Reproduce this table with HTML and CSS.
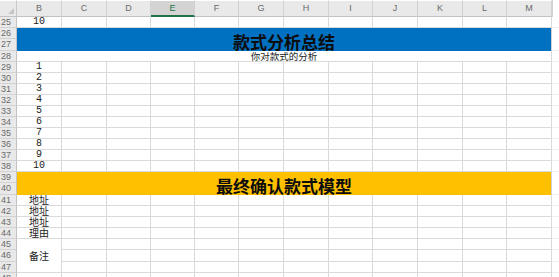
FILE: index.html
```html
<!DOCTYPE html>
<html lang="zh">
<head>
<meta charset="utf-8">
<title>Sheet</title>
<link rel="stylesheet" href="styles.css">
</head>
<body>
<div class="sheet">
  <div class="corner"></div>
  <div class="ch">B</div><div class="ch">C</div><div class="ch">D</div><div class="ch sel">E</div><div class="ch">F</div><div class="ch">G</div><div class="ch">H</div><div class="ch">I</div><div class="ch">J</div><div class="ch">K</div><div class="ch">L</div><div class="ch">M</div><div class="fh"></div>

  <div class="rh">25</div><div class="c num">10</div><i class="c"></i><i class="c"></i><i class="c"></i><i class="c"></i><i class="c"></i><i class="c"></i><i class="c"></i><i class="c"></i><i class="c"></i><i class="c"></i><i class="c"></i><i class="f"></i>

  <div class="rh">26</div><div class="band blue">款式分析总结</div><i class="f f2"></i>
  <div class="rh">27</div>

  <div class="rh">28</div><div class="c sub">你对款式的分析</div><i class="f"></i>

  <div class="rh">29</div><div class="c num">1</div><i class="c"></i><i class="c"></i><i class="c"></i><i class="c"></i><i class="c"></i><i class="c"></i><i class="c"></i><i class="c"></i><i class="c"></i><i class="c"></i><i class="c"></i><i class="f"></i>
  <div class="rh">30</div><div class="c num">2</div><i class="c"></i><i class="c"></i><i class="c"></i><i class="c"></i><i class="c"></i><i class="c"></i><i class="c"></i><i class="c"></i><i class="c"></i><i class="c"></i><i class="c"></i><i class="f"></i>
  <div class="rh">31</div><div class="c num">3</div><i class="c"></i><i class="c"></i><i class="c"></i><i class="c"></i><i class="c"></i><i class="c"></i><i class="c"></i><i class="c"></i><i class="c"></i><i class="c"></i><i class="c"></i><i class="f"></i>
  <div class="rh">32</div><div class="c num">4</div><i class="c"></i><i class="c"></i><i class="c"></i><i class="c"></i><i class="c"></i><i class="c"></i><i class="c"></i><i class="c"></i><i class="c"></i><i class="c"></i><i class="c"></i><i class="f"></i>
  <div class="rh">33</div><div class="c num">5</div><i class="c"></i><i class="c"></i><i class="c"></i><i class="c"></i><i class="c"></i><i class="c"></i><i class="c"></i><i class="c"></i><i class="c"></i><i class="c"></i><i class="c"></i><i class="f"></i>
  <div class="rh">34</div><div class="c num">6</div><i class="c"></i><i class="c"></i><i class="c"></i><i class="c"></i><i class="c"></i><i class="c"></i><i class="c"></i><i class="c"></i><i class="c"></i><i class="c"></i><i class="c"></i><i class="f"></i>
  <div class="rh">35</div><div class="c num">7</div><i class="c"></i><i class="c"></i><i class="c"></i><i class="c"></i><i class="c"></i><i class="c"></i><i class="c"></i><i class="c"></i><i class="c"></i><i class="c"></i><i class="c"></i><i class="f"></i>
  <div class="rh">36</div><div class="c num">8</div><i class="c"></i><i class="c"></i><i class="c"></i><i class="c"></i><i class="c"></i><i class="c"></i><i class="c"></i><i class="c"></i><i class="c"></i><i class="c"></i><i class="c"></i><i class="f"></i>
  <div class="rh">37</div><div class="c num">9</div><i class="c"></i><i class="c"></i><i class="c"></i><i class="c"></i><i class="c"></i><i class="c"></i><i class="c"></i><i class="c"></i><i class="c"></i><i class="c"></i><i class="c"></i><i class="f"></i>
  <div class="rh">38</div><div class="c num">10</div><i class="c"></i><i class="c"></i><i class="c"></i><i class="c"></i><i class="c"></i><i class="c"></i><i class="c"></i><i class="c"></i><i class="c"></i><i class="c"></i><i class="c"></i><i class="f"></i>

  <div class="rh">39</div><div class="band orange">最终确认款式模型</div><i class="f f2"></i>
  <div class="rh">40</div>

  <div class="rh">41</div><div class="c txt">地址</div><i class="c"></i><i class="c"></i><i class="c"></i><i class="c"></i><i class="c"></i><i class="c"></i><i class="c"></i><i class="c"></i><i class="c"></i><i class="c"></i><i class="c"></i><i class="f"></i>
  <div class="rh">42</div><div class="c txt">地址</div><i class="c"></i><i class="c"></i><i class="c"></i><i class="c"></i><i class="c"></i><i class="c"></i><i class="c"></i><i class="c"></i><i class="c"></i><i class="c"></i><i class="c"></i><i class="f"></i>
  <div class="rh">43</div><div class="c txt">地址</div><i class="c"></i><i class="c"></i><i class="c"></i><i class="c"></i><i class="c"></i><i class="c"></i><i class="c"></i><i class="c"></i><i class="c"></i><i class="c"></i><i class="c"></i><i class="f"></i>
  <div class="rh">44</div><div class="c txt">理由</div><i class="c"></i><i class="c"></i><i class="c"></i><i class="c"></i><i class="c"></i><i class="c"></i><i class="c"></i><i class="c"></i><i class="c"></i><i class="c"></i><i class="c"></i><i class="f"></i>
  <div class="rh">45</div><div class="c txt memo">备注</div><i class="c"></i><i class="c"></i><i class="c"></i><i class="c"></i><i class="c"></i><i class="c"></i><i class="c"></i><i class="c"></i><i class="c"></i><i class="c"></i><i class="c"></i><i class="f"></i>
  <div class="rh">46</div><i class="c"></i><i class="c"></i><i class="c"></i><i class="c"></i><i class="c"></i><i class="c"></i><i class="c"></i><i class="c"></i><i class="c"></i><i class="c"></i><i class="c"></i><i class="f"></i>
  <div class="rh">47</div><i class="c"></i><i class="c"></i><i class="c"></i><i class="c"></i><i class="c"></i><i class="c"></i><i class="c"></i><i class="c"></i><i class="c"></i><i class="c"></i><i class="c"></i><i class="f"></i>
  <div class="rh">48</div><i class="c"></i><i class="c"></i><i class="c"></i><i class="c"></i><i class="c"></i><i class="c"></i><i class="c"></i><i class="c"></i><i class="c"></i><i class="c"></i><i class="c"></i><i class="c"></i><i class="f"></i>
</div>
</body>
</html>
```
FILE: styles.css
```css
html, body {
  margin: 0;
  padding: 0;
  background: #ffffff;
}
body {
  width: 559px;
  height: 277px;
  overflow: hidden;
  font-family: "Liberation Sans", "Noto Sans CJK SC", sans-serif;
}
.sheet {
  display: grid;
  grid-template-columns: 17px 45px 45px 44px 44px 44px 45px 45px 44px 45px 45px 44px 45px 1fr;
  grid-template-rows: 17px 11px 11px 12px 11px repeat(10, 11px) 11px 12px repeat(5, 11px) 12px 11px 11px;
  width: 559px;
}
.sheet > * {
  box-sizing: border-box;
  min-width: 0;
}
.corner {
  background: #e9e9e9;
  border-top: 1px solid #ffffff;
  border-right: 1px solid #c8c8c8;
  border-bottom: 1px solid #c2c2c2;
  display: flex;
  justify-content: flex-end;
  align-items: flex-end;
  padding: 0 2px 2px 0;
}
.corner::after {
  content: "";
  display: block;
  width: 0;
  height: 0;
  border-style: solid;
  border-width: 0 0 6px 6px;
  border-color: transparent transparent #c4c4c4 transparent;
}
.ch {
  background: #e9e9e9;
  border-top: 1px solid #ffffff;
  border-right: 1px solid #d2d2d2;
  border-bottom: 1px solid #c2c2c2;
  display: flex;
  align-items: center;
  justify-content: center;
  font-size: 9px;
  line-height: 1;
  color: #6a6a6a;
}
.ch.sel {
  background: #d4d4d4;
  color: #217346;
  border-bottom: 2px solid #217346;
}
.fh {
  background: #ffffff;
  border-left: 1px solid #d2d2d2;
}
.rh {
  background: #e9e9e9;
  border-right: 1px solid #c2c2c2;
  border-bottom: 1px solid #d2d2d2;
  display: flex;
  align-items: center;
  padding-left: 1px;
  font-size: 9px;
  line-height: 1;
  color: #6a6a6a;
}
.c {
  display: block;
  border-right: 1px solid #dadada;
  border-bottom: 1px solid #dadada;
}
.f {
  display: block;
  border-bottom: 1px solid #f0f0f0;
}
.f2 {
  grid-row: span 2;
}
.num {
  display: flex;
  align-items: center;
  justify-content: center;
  font-family: "Liberation Mono", monospace;
  font-size: 10px;
  line-height: 1;
  color: #222222;
}
.txt {
  display: flex;
  align-items: center;
  justify-content: center;
  font-family: "Noto Sans CJK SC", sans-serif;
  font-size: 10px;
  line-height: 10px;
  color: #222222;
}
.memo {
  grid-row: span 3;
}
.sub {
  grid-column: span 12;
  display: flex;
  align-items: center;
  justify-content: center;
  font-family: "Noto Sans CJK SC", sans-serif;
  font-size: 9.5px;
  line-height: 10px;
  color: #222222;
}
.band {
  grid-column: span 12;
  grid-row: span 2;
  display: flex;
  align-items: flex-end;
  justify-content: center;
  font-family: "Noto Sans CJK SC", sans-serif;
  font-weight: 700;
  font-size: 17px;
  line-height: 18px;
  color: #0d0d0d;
  border-right: 1px solid #d0d0d0;
}
.blue {
  background: #0070c0;
}
.orange {
  background: #ffc000;
}
```
